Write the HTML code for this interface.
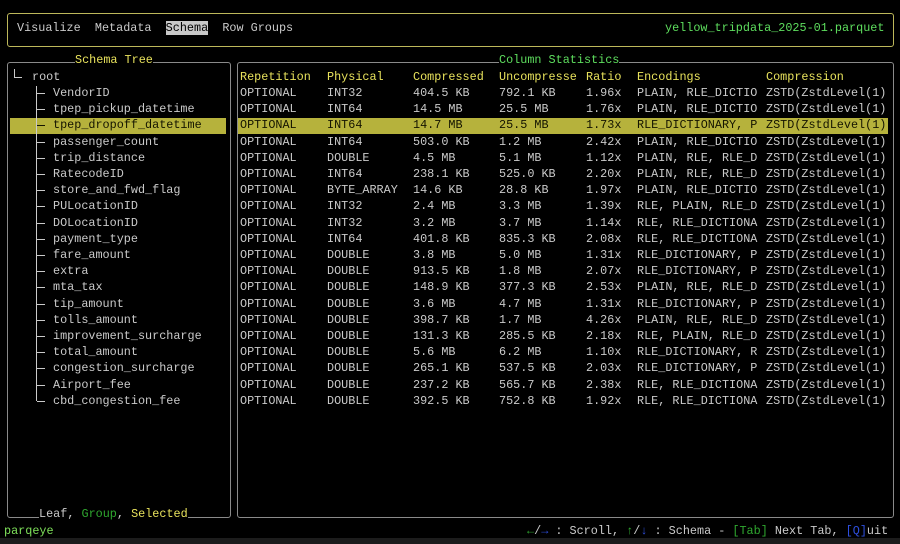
<!DOCTYPE html>
<html><head><meta charset="utf-8"><style>
*{margin:0;padding:0;box-sizing:border-box}
body{width:900px;height:544px;background:#000;overflow:hidden;position:relative;font-family:"Liberation Mono",monospace;font-size:11.8px;color:#cacaca}
.a{position:absolute;white-space:pre;line-height:16px}
.box{position:absolute;border:1px solid #8a8a8a;border-radius:3px}
.y{color:#e8e25c}.g{color:#5ede5e}.dg{color:#2fa82f}.b{color:#2e4fe0}
.hl{position:absolute;background:#b6b23c}
</style></head><body>
<div class="box" style="left:7px;top:13px;width:887px;height:34px;border-color:#bdb75a"></div>
<div class="a" style="left:17px;top:20px">Visualize  Metadata  <span style="background:#c8c8c8;color:#000">Schema</span>  Row Groups</div>
<div class="a g" style="left:665px;top:20px">yellow_tripdata_2025-01.parquet</div>

<div class="box" style="left:7px;top:62px;width:224px;height:456px"></div>
<div class="box" style="left:237px;top:62px;width:657px;height:456px"></div>
<div class="a y" style="left:75px;top:52px;background:#000">Schema Tree</div>
<div class="a g" style="left:499px;top:52px;background:#000">Column Statistics</div>
<div class="a" style="left:39px;top:506px;background:#000">Leaf, <span class="dg">Group</span>, <span class="y">Selected</span></div>

<div class="hl" style="left:10px;top:118px;width:216px;height:16px"></div>
<div class="hl" style="left:238px;top:118px;width:650px;height:16px"></div>

<div style="position:absolute;left:14px;top:69px;width:1px;height:8px;background:#cacaca"></div>
<div style="position:absolute;left:14px;top:77px;width:8px;height:1px;background:#cacaca"></div>
<div class="a" style="left:32px;top:69px">root</div>
<div style="position:absolute;left:36px;top:86px;width:1px;height:315px;background:#cacaca"></div>
<div id="tree"></div>
<div id="tbl"></div>

<div class="a" style="left:4px;top:523px;color:#7ee05a">parqeye</div>
<div class="a" style="left:527px;top:523px"><span class="dg">←</span>/<span class="b">→</span> : Scroll, <span class="dg">↑</span>/<span class="b">↓</span> : Schema - <span class="dg">[Tab]</span> Next Tab, <span class="b">[Q]</span>uit</div>
<div style="position:absolute;left:0;top:538px;width:900px;height:6px;background:#1c1c1c"></div>
<script>
(function(){
var names=["VendorID","tpep_pickup_datetime","tpep_dropoff_datetime","passenger_count","trip_distance","RatecodeID","store_and_fwd_flag","PULocationID","DOLocationID","payment_type","fare_amount","extra","mta_tax","tip_amount","tolls_amount","improvement_surcharge","total_amount","congestion_surcharge","Airport_fee","cbd_congestion_fee"];
var d=[["INT32","404.5 KB","792.1 KB","1.96x","PLAIN, RLE_DICTIO"],["INT64","14.5 MB","25.5 MB","1.76x","PLAIN, RLE_DICTIO"],["INT64","14.7 MB","25.5 MB","1.73x","RLE_DICTIONARY, P"],["INT64","503.0 KB","1.2 MB","2.42x","PLAIN, RLE_DICTIO"],["DOUBLE","4.5 MB","5.1 MB","1.12x","PLAIN, RLE, RLE_D"],["INT64","238.1 KB","525.0 KB","2.20x","PLAIN, RLE, RLE_D"],["BYTE_ARRAY","14.6 KB","28.8 KB","1.97x","PLAIN, RLE_DICTIO"],["INT32","2.4 MB","3.3 MB","1.39x","RLE, PLAIN, RLE_D"],["INT32","3.2 MB","3.7 MB","1.14x","RLE, RLE_DICTIONA"],["INT64","401.8 KB","835.3 KB","2.08x","RLE, RLE_DICTIONA"],["DOUBLE","3.8 MB","5.0 MB","1.31x","RLE_DICTIONARY, P"],["DOUBLE","913.5 KB","1.8 MB","2.07x","RLE_DICTIONARY, P"],["DOUBLE","148.9 KB","377.3 KB","2.53x","PLAIN, RLE, RLE_D"],["DOUBLE","3.6 MB","4.7 MB","1.31x","RLE_DICTIONARY, P"],["DOUBLE","398.7 KB","1.7 MB","4.26x","PLAIN, RLE, RLE_D"],["DOUBLE","131.3 KB","285.5 KB","2.18x","RLE, PLAIN, RLE_D"],["DOUBLE","5.6 MB","6.2 MB","1.10x","RLE_DICTIONARY, R"],["DOUBLE","265.1 KB","537.5 KB","2.03x","RLE_DICTIONARY, P"],["DOUBLE","237.2 KB","565.7 KB","2.38x","RLE, RLE_DICTIONA"],["DOUBLE","392.5 KB","752.8 KB","1.92x","RLE, RLE_DICTIONA"]];
var xs=[240,327,413,499,586,637,766],h="";
var hd=["Repetition","Physical","Compressed","Uncompresse","Ratio","Encodings","Compression"];
hd.forEach(function(t,j){h+='<div class="a y" style="left:'+xs[j]+'px;top:69px">'+t+'</div>';});
var t="";
for(var i=0;i<20;i++){var yy=85+16.2*i;var sel=i==2;var c=sel?'color:#141400;':'';
 t+='<div style="position:absolute;left:37px;top:'+(yy+8)+'px;width:8px;height:1px;background:'+(sel?'#141400':'#cacaca')+'"></div>';
 t+='<div class="a" style="left:53px;top:'+yy+'px;'+c+'">'+names[i]+'</div>';
 var row=["OPTIONAL"].concat(d[i]).concat(["ZSTD(ZstdLevel(1)"]);
 row.forEach(function(v,j){h+='<div class="a" style="left:'+xs[j]+'px;top:'+yy+'px;'+c+'">'+v+'</div>';});}
document.getElementById("tree").innerHTML=t;document.getElementById("tbl").innerHTML=h;
})();
</script>
</body></html>
